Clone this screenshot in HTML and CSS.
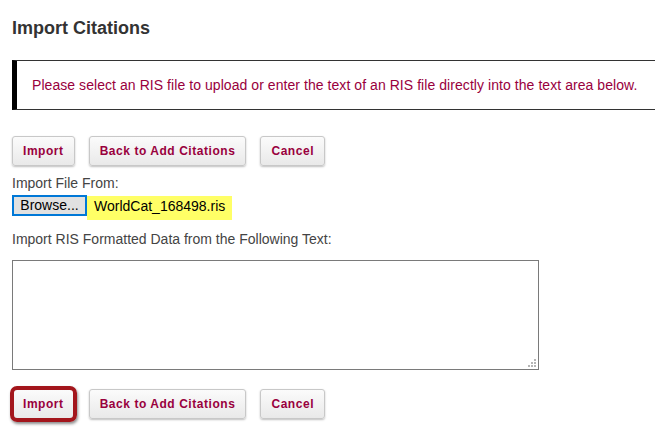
FILE: index.html
```html
<!DOCTYPE html>
<html>
<head>
<meta charset="utf-8">
<link rel="stylesheet" href="styles.css">
</head>
<body>
<div class="page">
  <h1 class="title">Import Citations</h1>
  <div class="notice">Please select an RIS file to upload or enter the text of an RIS file directly into the text area below.</div>
  <div class="actions top-actions">
    <button class="btn">Import</button>
    <button class="btn">Back to Add Citations</button>
    <button class="btn">Cancel</button>
  </div>
  <div class="label label-file">Import File From:</div>
  <div class="file-row">
    <span class="browse">Browse...</span>
    <span class="filename">WorldCat_168498.ris</span>
  </div>
  <div class="label label-text">Import RIS Formatted Data from the Following Text:</div>
  <div class="area-wrap">
    <textarea class="area"></textarea>
    <span class="grip"><i></i><i></i><i></i><i></i><i></i><i></i></span>
  </div>
  <div class="actions bottom-actions">
    <button class="btn btn-marked">Import</button>
    <button class="btn">Back to Add Citations</button>
    <button class="btn">Cancel</button>
  </div>
</div>
</body>
</html>
```
FILE: styles.css
```css
html, body {
  margin: 0;
  padding: 0;
  overflow: hidden;
  background: #fff;
}
body {
  width: 655px;
  height: 442px;
  font-family: "Liberation Sans", Arial, sans-serif;
}
.page {
  padding: 0 12px;
}
.title {
  margin: 17px 0 0;
  font-size: 18px;
  line-height: 22px;
  font-weight: bold;
  color: #333;
}
.notice {
  margin-top: 21px;
  margin-right: -40px;
  border-top: 1px solid #333;
  border-bottom: 1px solid #333;
  border-left: 5px solid #000;
  padding: 16px 15px;
  font-size: 14px;
  line-height: 16px;
  letter-spacing: 0.06px;
  color: #99003d;
}
.actions {
  display: flex;
  gap: 14px;
}
.top-actions {
  margin-top: 26px;
}
.btn {
  height: 30px;
  padding: 0 10px;
  border: 1px solid #c8c8c8;
  border-radius: 3px;
  background: linear-gradient(#fbfbfb, #e9e9e9);
  box-shadow: 0 1px 2px rgba(0,0,0,0.25);
  font-family: "Liberation Sans", Arial, sans-serif;
  font-size: 12px;
  font-weight: bold;
  letter-spacing: 0.55px;
  color: #99003d;
  position: relative;
}
.label {
  font-size: 14px;
  line-height: 16px;
  color: #444;
}
.label-file {
  margin-top: 9px;
}
.file-row {
  display: flex;
  align-items: flex-start;
  margin-top: 4px;
}
.browse {
  box-sizing: border-box;
  width: 75px;
  height: 21px;
  border: 2px solid #0078d7;
  background: #e1e1e1;
  font-size: 14px;
  line-height: 17px;
  color: #000;
  text-align: center;
}
.filename {
  margin-top: 1px;
  height: 24px;
  padding: 0 7px;
  background: #ffff66;
  font-size: 14px;
  line-height: 21px;
  color: #000;
}
.label-text {
  margin-top: 11px;
}
.area-wrap {
  position: relative;
  width: 527px;
  margin-top: 13px;
}
.area {
  display: block;
  box-sizing: border-box;
  width: 527px;
  height: 110px;
  margin: 0;
  border: 1px solid #7a7a7a;
  resize: none;
  background: #fff;
}
.grip {
  position: absolute;
  right: 3px;
  bottom: 3px;
  width: 8px;
  height: 8px;
}
.grip i {
  position: absolute;
  width: 2px;
  height: 2px;
  background: #b5b5b5;
}
.grip i:nth-child(1) { right: 0; bottom: 6px; }
.grip i:nth-child(2) { right: 0; bottom: 3px; }
.grip i:nth-child(3) { right: 3px; bottom: 3px; }
.grip i:nth-child(4) { right: 0; bottom: 0; }
.grip i:nth-child(5) { right: 3px; bottom: 0; }
.grip i:nth-child(6) { right: 6px; bottom: 0; }
.bottom-actions {
  margin-top: 19px;
}
.btn-marked::after {
  content: "";
  position: absolute;
  left: -3px;
  top: -4px;
  right: -3px;
  bottom: -4px;
  border: 4px solid #a3161c;
  border-radius: 7px;
  box-shadow: 1px 2px 3px rgba(0,0,0,0.45);
}
```
